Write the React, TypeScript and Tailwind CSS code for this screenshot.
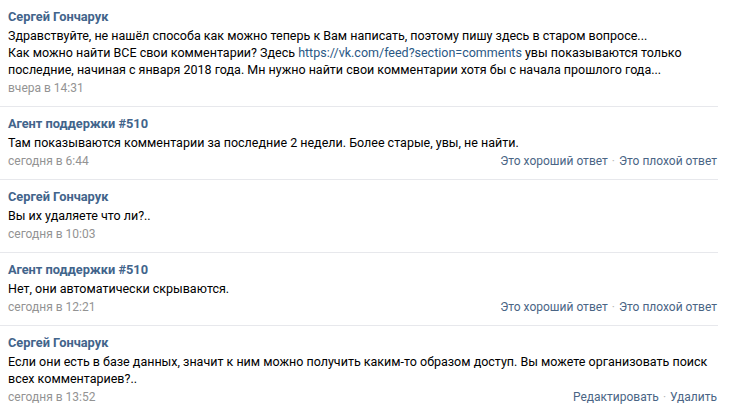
import React from 'react';

interface Message {
  author: string;
  text: React.ReactNode;
  date: string;
  actions?: string[];
  last?: boolean;
}

const messages: Message[] = [
  {
    author: 'Сергей Гончарук',
    text: (
      <>
        Здравствуйте, не нашёл способа как можно теперь к Вам написать, поэтому пишу здесь в старом вопросе...
        <br />
        Как можно найти ВСЕ свои комментарии? Здесь{' '}
        <span className="text-[#2a5885]">https://vk.com/feed?section=comments</span> увы показываются только
        последние, начиная с января 2018 года. Мн нужно найти свои комментарии хотя бы с начала прошлого года...
      </>
    ),
    date: 'вчера в 14:31',
  },
  {
    author: 'Агент поддержки #510',
    text: 'Там показываются комментарии за последние 2 недели. Более старые, увы, не найти.',
    date: 'сегодня в 6:44',
    actions: ['Это хороший ответ', 'Это плохой ответ'],
  },
  {
    author: 'Сергей Гончарук',
    text: 'Вы их удаляете что ли?..',
    date: 'сегодня в 10:03',
  },
  {
    author: 'Агент поддержки #510',
    text: 'Нет, они автоматически скрываются.',
    date: 'сегодня в 12:21',
    actions: ['Это хороший ответ', 'Это плохой ответ'],
  },
  {
    author: 'Сергей Гончарук',
    text: 'Если они есть в базе данных, значит к ним можно получить каким-то образом доступ. Вы можете организовать поиск всех комментариев?..',
    date: 'сегодня в 13:52',
    actions: ['Редактировать', 'Удалить'],
    last: true,
  },
];

function Reply({ author, text, date, actions, last }: Message) {
  return (
    <div className={last ? 'pl-[8px] pt-[9px] pb-[10px]' : 'pl-[8px] pt-[9px] pb-[10px] border-b border-[#e7e8ec]'}>
      <div className="text-[12.8px] leading-[16px] font-bold text-[#42648b]">{author}</div>
      <div className="mt-[2px] text-[12.5px] leading-[17px] text-black">{text}</div>
      <div className="mt-[2px] flex justify-between text-[12px] leading-[16px]">
        <span className="text-[#939393]">{date}</span>
        {actions && (
          <span className="text-[#4a6585] pr-[1px]">
            {actions[0]}
            <span className="text-[#b8b8b8] mx-[4px]">·</span>
            {actions[1]}
          </span>
        )}
      </div>
    </div>
  );
}

export default function App() {
  return (
    <div className="w-[732px] h-[415px] overflow-hidden bg-white" style={{ fontFamily: 'Roboto, "Open Sans", sans-serif' }}>
      <div className="w-[718px]">
        {messages.map((m, i) => (
          <Reply key={i} {...m} />
        ))}
      </div>
    </div>
  );
}
